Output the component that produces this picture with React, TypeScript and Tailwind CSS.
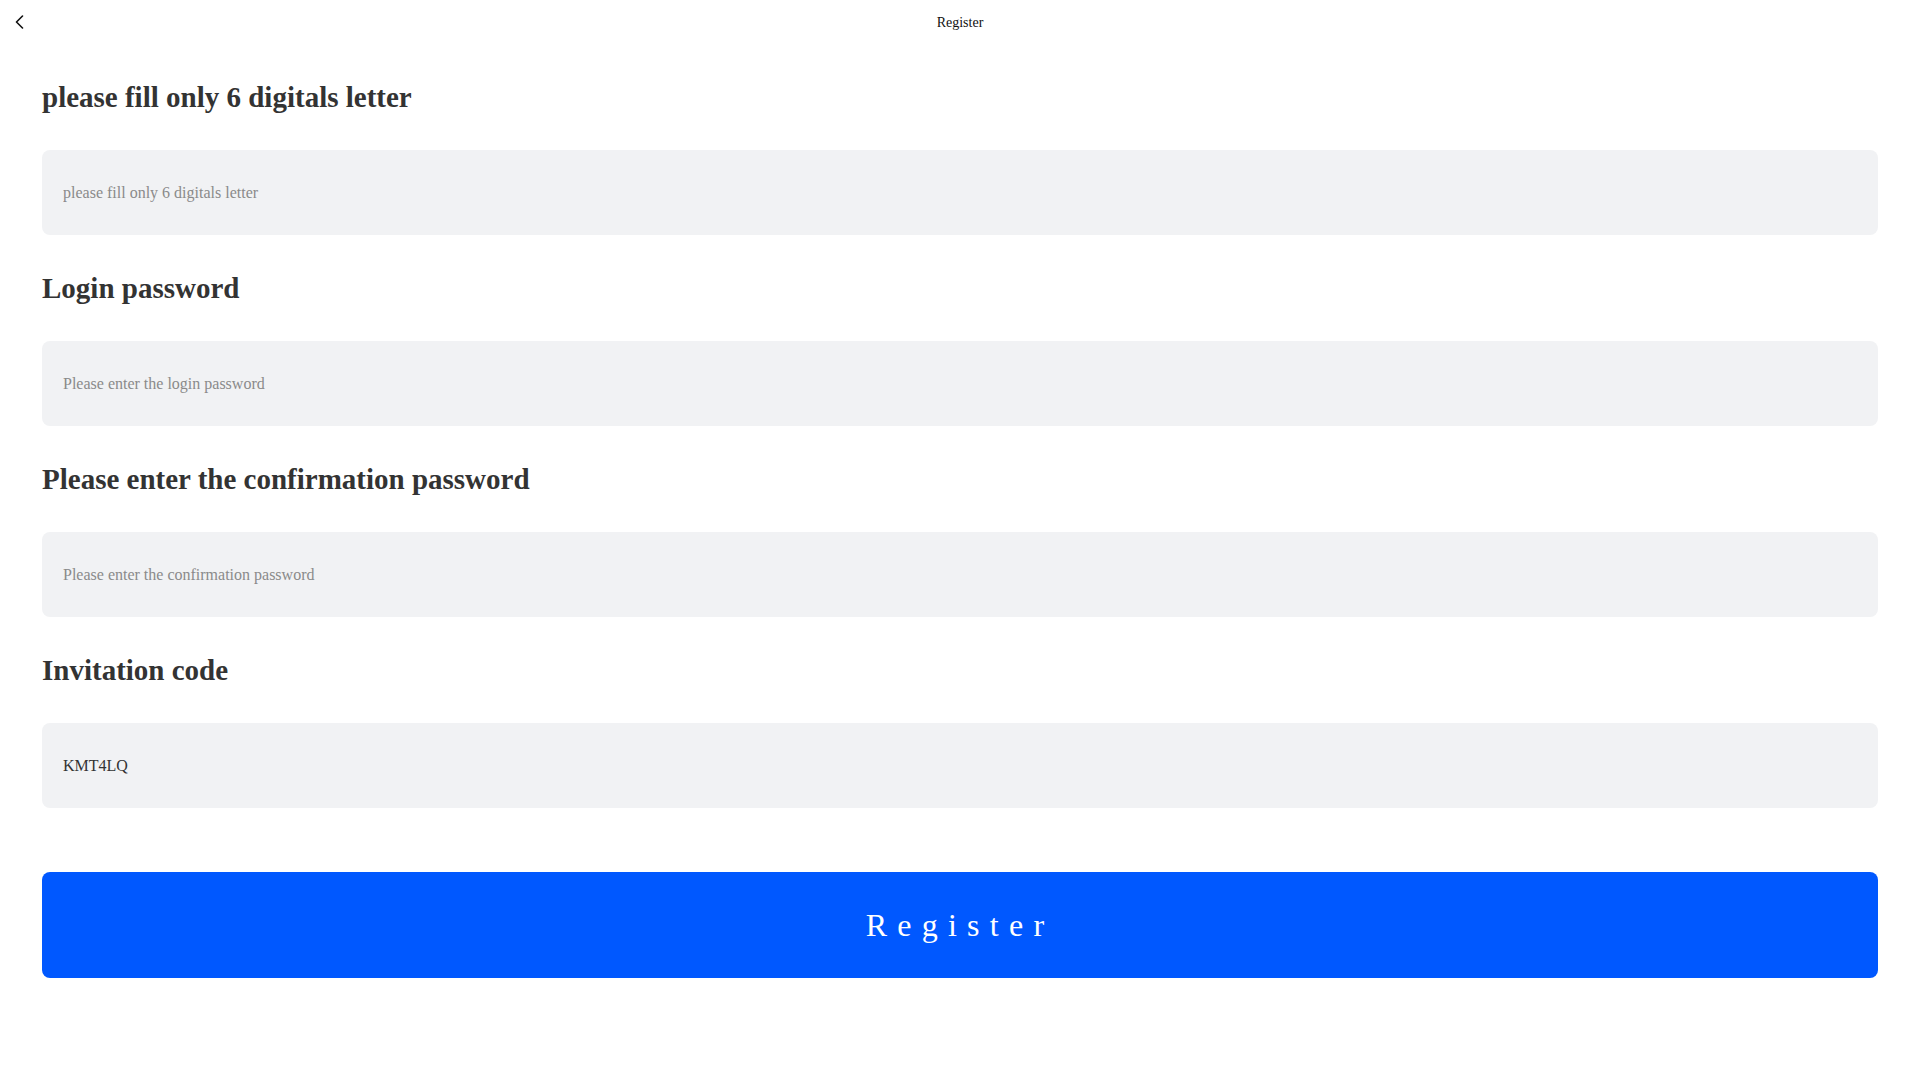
import React from 'react';

const FIELDS = [
  { label: 'please fill only 6 digitals letter', placeholder: 'please fill only 6 digitals letter', type: 'text', value: '' },
  { label: 'Login password', placeholder: 'Please enter the login password', type: 'password', value: '' },
  { label: 'Please enter the confirmation password', placeholder: 'Please enter the confirmation password', type: 'password', value: '' },
  { label: 'Invitation code', placeholder: 'Please enter the invitation code', type: 'text', value: 'KMT4LQ' },
];

export default function App() {
  return (
    <div className="min-h-screen bg-white font-['Liberation_Serif',serif] text-[#333]">
      {/* top bar */}
      <header className="grid h-[44px] grid-cols-[1fr_auto_1fr] items-center">
        <button className="flex h-full w-[44px] items-center pl-[15px]" aria-label="Back">
          <svg width="9" height="14" viewBox="0 0 9 14" fill="none">
            <polyline points="7.5,1 1.5,7 7.5,13" stroke="#111" strokeWidth="1.6" strokeLinecap="round" strokeLinejoin="round" />
          </svg>
        </button>
        <h1 className="text-[14px] text-[#111]">Register</h1>
        <div />
      </header>

      <main className="px-[42px]">
        {FIELDS.map((f) => (
          <div key={f.label}>
            <h2 className="pt-[33px] pb-[32px] text-[29px] leading-[41px] font-bold text-[#333]">{f.label}</h2>
            <input
              type={f.type}
              defaultValue={f.value}
              placeholder={f.placeholder}
              className="block h-[85px] w-full rounded-lg bg-[#f1f2f4] px-[21px] text-[16px] text-[#333] outline-none placeholder:text-[#8a8a8a]"
            />
          </div>
        ))}

        <button className="mt-[64px] flex h-[106px] w-full items-center justify-center rounded-lg bg-[#0058ff] text-[32px] tracking-[0.32em] text-white">
          Register
        </button>
      </main>
    </div>
  );
}
